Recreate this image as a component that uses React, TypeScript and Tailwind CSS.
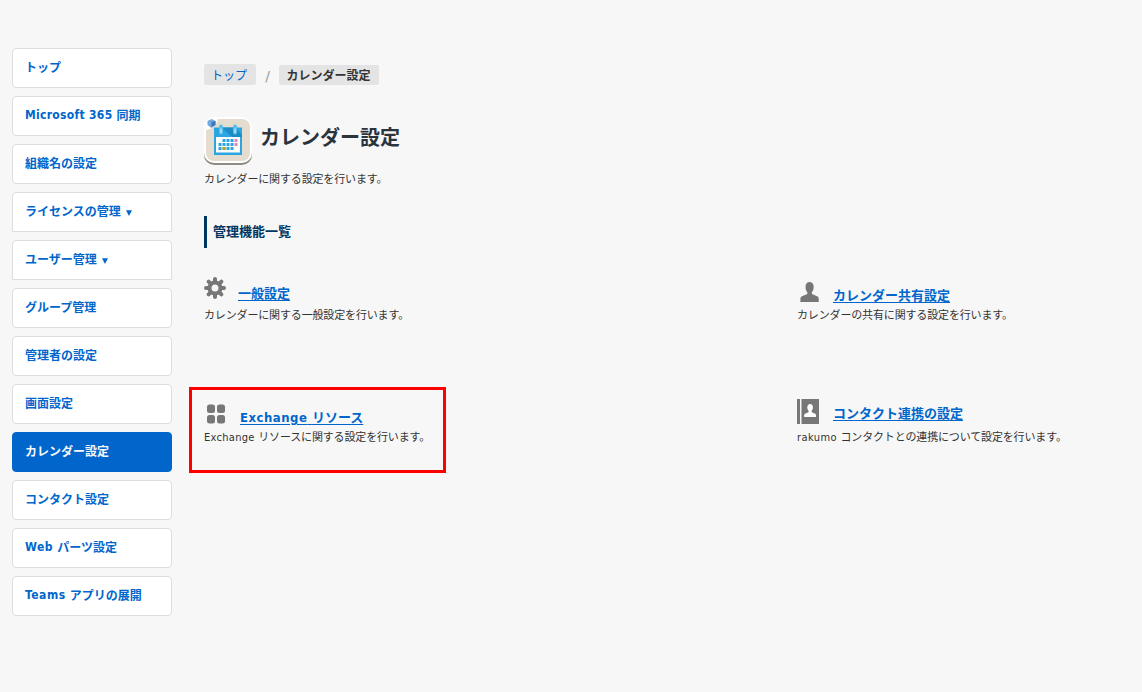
import type { ReactNode } from 'react'

interface NavItem {
  latin?: string
  label: string
  menu?: boolean
  active?: boolean
}

const NAV: NavItem[] = [
  { label: 'トップ' },
  { latin: 'Microsoft 365', label: '同期' },
  { label: '組織名の設定' },
  { label: 'ライセンスの管理', menu: true },
  { label: 'ユーザー管理', menu: true },
  { label: 'グループ管理' },
  { label: '管理者の設定' },
  { label: '画面設定' },
  { label: 'カレンダー設定', active: true },
  { label: 'コンタクト設定' },
  { latin: 'Web', label: 'パーツ設定' },
  { latin: 'Teams', label: 'アプリの展開' },
]

function Latin({ children, tracking = 'tracking-[0.5px]' }: { children: ReactNode; tracking?: string }) {
  return <span className={`font-['DejaVu_Sans_Condensed','DejaVu_Sans',sans-serif] ${tracking}`}>{children} </span>
}

function CalendarLogo() {
  return (
    <svg width="48" height="48" viewBox="0 0 48 48" className="shrink-0">
      <rect x="0" y="2" width="48" height="46" rx="10" fill="#8f8b80" />
      <rect x="0" y="0" width="48" height="46" rx="10" fill="#fff" />
      <rect x="2" y="2" width="44" height="42" rx="8" fill="#e3dccf" />
      <path d="M0 13V10A10 10 0 0 1 10 0h4A13 13 0 0 1 0 13z" fill="#fff" />
      <path d="M3.5 4l4-2 4 2v4l-4 3-4-3z" fill="#72a8dc" />
      <path d="M7.5 5l4-1v4l-4 2z" fill="#3c78bd" />
      <rect x="10" y="10.5" width="28" height="27.5" fill="#29a6e2" />
      <path d="M18 10.5h13l7 7.5v2H28z" fill="#1c8cc7" />
      <rect x="12" y="20" width="24" height="15.5" fill="#fff" />
      <path d="M17 9.5v6M31 9.5v6" stroke="#58bfea" strokeWidth="4" strokeLinecap="round" />
      <path d="M17 12.5v3M31 12.5v3" stroke="#a5d9ef" strokeWidth="2" strokeLinecap="round" />
      <path d="M18.5 23.5h11M14.5 27.5h15M14.5 31.5h15" stroke="#29a6e2" strokeWidth="3" strokeDasharray="3 1" />
      <path d="M30.5 23.5h3M30.5 27.5h3" stroke="#df86b5" strokeWidth="3" />
      <path d="M18.5 31.5h3" stroke="#b5a51b" strokeWidth="3" />
    </svg>
  )
}

function GearIcon() {
  return (
    <svg width="22" height="22" viewBox="0 0 22 22" fill="none" stroke="#777">
      <circle cx="11" cy="11" r="5.5" strokeWidth="4" />
      <path d="M11 2v3M11 17v3M2 11h3M17 11h3M4.6 4.6l2.2 2.2M15.2 15.2l2.2 2.2M17.4 4.6l-2.2 2.2M6.8 15.2l-2.2 2.2" strokeWidth="4" strokeLinecap="round" />
    </svg>
  )
}

function PersonIcon() {
  return (
    <svg width="20" height="20" viewBox="0 0 20 20" fill="#777">
      <path d="M5.5 5C5.5 1.8 7.2 0 9.6 0s4.1 1.8 4.1 5c0 2.4-.8 4.2-1.8 5.1v2l5.2 2.2c1.2.5 1.6 1.3 1.6 2.4V20H.4v-3.3c0-1.1.5-1.9 1.6-2.4l5.3-2.2v-2C6.3 9.2 5.5 7.4 5.5 5z" />
    </svg>
  )
}

function TilesIcon() {
  return (
    <svg width="22" height="20" viewBox="0 0 22 20" fill="#777">
      <rect x="3" y="0.5" width="8" height="8.5" rx="2.5" />
      <rect x="13" y="0.5" width="8" height="8.5" rx="2.5" />
      <rect x="3" y="11" width="8" height="8.5" rx="2.5" />
      <rect x="13" y="11" width="8" height="8.5" rx="2.5" />
    </svg>
  )
}

function ContactIcon() {
  return (
    <svg width="22" height="25" viewBox="0 0 22 25">
      <path d="M0 0h3v25H0zM4.5 0H22v25H4.5z" fill="#777" />
      <path d="M10.3 8.2C10.3 6.3 11.3 5 13.1 5s2.8 1.3 2.8 3.2c0 1.6-.5 2.7-1.2 3.4v1.6l3 1.2c1 .4 1.3 1 1.3 2V18H7.2v-1.6c0-1 .3-1.6 1.3-2l3-1.2v-1.6c-.7-.7-1.2-1.8-1.2-3.4z" fill="#fff" />
    </svg>
  )
}

const LINK = 'text-[13px] leading-5 font-bold text-[#0066cc] underline underline-offset-2'
const DESC = 'text-[11px] leading-4 tracking-[-0.15px] whitespace-nowrap'

export default function App() {
  return (
    <div className="flex h-[692px] w-[1142px] gap-8 overflow-hidden bg-[#f7f7f7] pt-12 pl-3 font-['Noto_Sans_CJK_JP',sans-serif] text-[#333]">
      <nav className="flex w-40 shrink-0 flex-col gap-2">
        {NAV.map(item => (
          <a
            key={item.label}
            className={`flex h-10 items-center border px-3 pb-0.5 text-xs font-bold whitespace-pre ${
              item.menu ? 'rounded-t' : 'rounded'
            } ${item.active ? 'border-[#0066cc] bg-[#0066cc] text-[#f7f7f7]' : 'border-[#ddd] bg-white text-[#0066cc]'}`}
          >
            {item.latin && (
              <Latin tracking={item.latin.length > 8 ? 'tracking-[0.3px]' : 'tracking-[0.5px]'}>{item.latin}</Latin>
            )}
            {item.label}
            {item.menu && (
              <svg width="6" height="6" viewBox="0 0 6 6" className="mt-1 ml-[5px]" fill="currentColor">
                <path d="M0 .3h6L3 6z" />
              </svg>
            )}
          </a>
        ))}
      </nav>

      <main className="flex-1">
        {/* Breadcrumb */}
        <div className="mt-4 flex h-[21px] items-end">
          <a className="h-[21px] w-[52px] rounded-xs bg-[#e4e4e4] pr-0.5 text-center text-xs leading-[21px] text-[#0066cc]">トップ</a>
          <span className="w-[23px] text-center font-['DejaVu_Sans',sans-serif] text-sm leading-[17px] text-[#999]">/</span>
          <span className="h-5 w-[100px] rounded-xs bg-[#e4e4e4] pr-px text-center text-xs leading-[19px] font-bold">カレンダー設定</span>
        </div>

        {/* Title */}
        <div className="mt-8 flex h-12 gap-2">
          <CalendarLogo />
          <h1 className="text-xl leading-10 font-bold text-[#2b333d]">カレンダー設定</h1>
        </div>
        <p className={`mt-[5px] ${DESC}`}>カレンダーに関する設定を行います。</p>

        <h2 className="mt-[30px] h-8 border-l-3 border-[#003560] pl-1.5 text-[13px] leading-[30px] font-bold text-[#003560]">管理機能一覧</h2>

        <div className="mt-[29px] grid grid-cols-[593px_1fr]">
          <section className="h-[122px]">
            <div className="flex h-[29px] gap-3">
              <GearIcon />
              <a className={`mt-[6px] ${LINK}`}>一般設定</a>
            </div>
            <p className={DESC}>カレンダーに関する一般設定を行います。</p>
          </section>
          <section className="h-[122px]">
            <div className="flex h-[29px] gap-[13px] pl-[3px]">
              <div className="mt-[5px]"><PersonIcon /></div>
              <a className={`mt-[8px] ${LINK}`}>カレンダー共有設定</a>
            </div>
            <p className={DESC}>カレンダーの共有に関する設定を行います。</p>
          </section>

          <section className="relative h-[122px]">
            <div className="flex h-[29px] gap-3.5">
              <div className="mt-[5px]"><TilesIcon /></div>
              <a className={`mt-[8px] ${LINK}`}><Latin>Exchange</Latin>リソース</a>
            </div>
            <p className={DESC}><Latin tracking="tracking-[0.3px]">Exchange</Latin>リソースに関する設定を行います。</p>
            <div className="absolute -top-[12px] -left-[15px] h-[86px] w-[257px] border-3 border-[#ff0000]" />
          </section>
          <section className="h-[122px]">
            <div className="flex h-[29px] gap-3.5">
              <ContactIcon />
              <a className={`mt-[4px] ${LINK}`}>コンタクト連携の設定</a>
            </div>
            <p className={DESC}><Latin tracking="tracking-[0.4px]">rakumo</Latin>コンタクトとの連携について設定を行います。</p>
          </section>
        </div>
      </main>
    </div>
  )
}
